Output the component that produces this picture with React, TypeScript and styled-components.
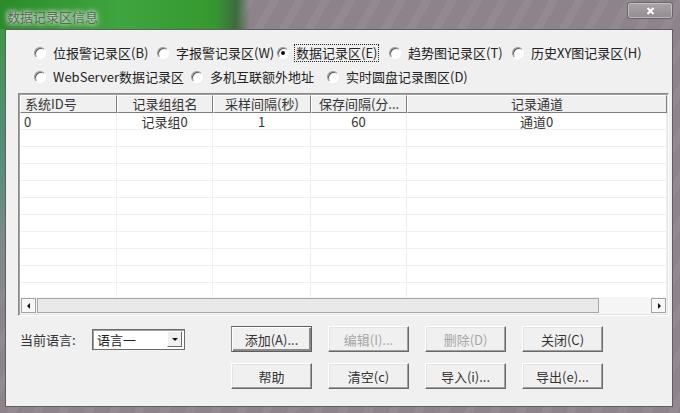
import React from "react";
import styled, { createGlobalStyle } from "styled-components";

const GlobalStyle = createGlobalStyle`
  html, body {
    margin: 0;
    padding: 0;
  }
  body {
    font-family: "Noto Sans CJK SC", "Noto Sans", sans-serif;
    font-size: 13px;
    color: #222;
  }
`;

// Window frame (aero style, green window behind on the left)
const Window = styled.div`
  width: 680px;
  height: 413px;
  box-sizing: border-box;
  display: flex;
  flex-direction: column;
  padding: 0 7px 6px 5px;
  background:
    linear-gradient(
        to right,
        #2b8a2b 0px,
        #3fa53f 120px,
        #35982f 215px,
        #3c6d3c 236px,
        rgba(142, 134, 140, 0) 250px
      )
      top left / 100% 29px no-repeat,
    linear-gradient(to bottom, #3a9a3a 0%, #4f8f78 35%, #7c8a8a 60%, rgba(142, 134, 140, 0) 80%)
      top left / 5px 100% no-repeat,
    repeating-linear-gradient(
      120deg,
      #8c848a 0px,
      #8c848a 14px,
      #928a90 14px,
      #928a90 22px
    );
`;

const TitleBar = styled.div`
  height: 29px;
  display: flex;
  justify-content: space-between;
  align-items: flex-start;
`;

const TitleText = styled.div`
  padding: 8px 0 0 2px;
  line-height: 18px;
  font-size: 13px;
  color: #5d685d;
  text-shadow: 0 0 4px #fff, 0 0 7px rgba(255, 255, 255, 0.9);
`;

const CloseButton = styled.div`
  width: 44px;
  height: 15px;
  margin: 2px 0 0 0;
  border: 1px solid #6b6469;
  border-radius: 3px;
  background: linear-gradient(to bottom, #aaa3a8, #928b90);
  box-shadow: inset 0 0 0 1px rgba(255, 255, 255, 0.35);
  display: flex;
  align-items: center;
  justify-content: center;
`;

const ClientArea = styled.div`
  flex: 1;
  display: flex;
  flex-direction: column;
  background: #f0f0f0;
  border: 1px solid #625d61;
  padding: 11px 3px 0 12px;
`;

// Radio buttons
const RadioGroup = styled.div`
  padding-left: 16px;
  margin-bottom: 4px;
`;

const RadioRow = styled.div`
  display: flex;
  height: 24px;
  align-items: center;
`;

const RadioItem = styled.label<{ $w?: number }>`
  display: flex;
  align-items: center;
  gap: 6px;
  width: ${(p) => (p.$w ? `${p.$w}px` : "auto")};
  flex: none;
  white-space: nowrap;
  line-height: 16px;
`;

const RadioCircle = styled.span<{ $checked?: boolean }>`
  width: 12px;
  height: 12px;
  box-sizing: border-box;
  border-radius: 50%;
  background: #fff;
  border: 1px solid;
  border-color: #9a9a9a #fff #fff #9a9a9a;
  box-shadow: inset 1px 1px 0 #5a5a5a;
  display: flex;
  align-items: center;
  justify-content: center;

  &::after {
    content: "";
    display: ${(p) => (p.$checked ? "block" : "none")};
    width: 4px;
    height: 4px;
    border-radius: 50%;
    background: #111;
  }
`;

const RadioText = styled.span<{ $focus?: boolean }>`
  padding: 0 1px;
  outline: ${(p) => (p.$focus ? "1px dotted #222" : "none")};
`;

// List view
const cols = "97px 96px 98px 96px 1fr";

const Table = styled.div`
  height: 223px;
  box-sizing: border-box;
  display: flex;
  flex-direction: column;
  border: 1px solid;
  border-color: #8a8a8a #fff #fff #8a8a8a;
  box-shadow: inset 1px 1px 0 #a0a0a0, inset -1px -1px 0 #e3e3e3;
  padding: 1px;
  background: #fff;
`;

const HeaderRow = styled.div`
  display: grid;
  grid-template-columns: ${cols};
  height: 18px;
  background: #f0f0f0;
`;

const HeaderCell = styled.div<{ $align?: string }>`
  box-sizing: border-box;
  border-top: 1px solid #fff;
  border-left: 1px solid #fff;
  border-right: 1px solid #7d7d7d;
  border-bottom: 1px solid #7d7d7d;
  text-align: ${(p) => p.$align || "center"};
  padding: 0 4px;
  line-height: 15px;
  color: #333;
  white-space: nowrap;
  overflow: hidden;
`;

const Body = styled.div`
  flex: 1;
  overflow: hidden;
`;

const Row = styled.div`
  display: grid;
  grid-template-columns: ${cols};
  height: 17px;
  box-sizing: border-box;
  border-bottom: 1px solid #f0f0f0;
`;

const Cell = styled.div<{ $align?: string }>`
  border-right: 1px solid #f0f0f0;
  text-align: ${(p) => p.$align || "center"};
  padding: 2px 4px 0;
  line-height: 14px;
  color: #333;
  white-space: nowrap;
`;

const ScrollBar = styled.div`
  height: 17px;
  display: grid;
  grid-template-columns: 17px 562px 1fr 17px;
  background: #f5f5f5;
  align-items: center;
`;

const ArrowButton = styled.div`
  width: 15px;
  height: 15px;
  box-sizing: border-box;
  border: 1px solid #a2a2a2;
  background: #f7f7f7;
  display: flex;
  align-items: center;
  justify-content: center;
  margin-left: 1px;
`;

const Thumb = styled.div`
  height: 15px;
  box-sizing: border-box;
  border: 1px solid #a7a7a7;
  background: #e9e9e9;
`;

// Bottom controls
const BottomBar = styled.div`
  display: flex;
  padding-top: 10px;
`;

const LangBlock = styled.div`
  width: 213px;
  height: 26px;
  display: flex;
  align-items: center;
  padding-left: 2px;
  box-sizing: border-box;
`;

const LangLabel = styled.span`
  width: 72px;
  color: #333;
`;

const Combo = styled.div`
  width: 93px;
  height: 21px;
  box-sizing: border-box;
  border: 1px solid #6b6b6b;
  box-shadow: inset 1px 1px 0 #a0a0a0;
  background: #fff;
  display: flex;
  align-items: center;
  justify-content: space-between;
  padding: 0 2px 0 4px;
`;

const DropButton = styled.div`
  width: 15px;
  height: 16px;
  box-sizing: border-box;
  background: #f0f0f0;
  border: 1px solid;
  border-color: #fff #696969 #696969 #fff;
  display: flex;
  align-items: center;
  justify-content: center;
`;

const ButtonGrid = styled.div`
  display: grid;
  grid-template-columns: repeat(4, 81px);
  grid-auto-rows: 26px;
  column-gap: 16px;
  row-gap: 11px;
`;

const Button = styled.div<{ $disabled?: boolean; $default?: boolean }>`
  box-sizing: border-box;
  background: #f0f0f0;
  border: 1px solid;
  border-color: ${(p) =>
    p.$default ? "#5e5e5e #5e5e5e #5e5e5e #8a8a8a" : "#fff #696969 #696969 #fff"};
  box-shadow: ${(p) =>
    p.$default
      ? "inset 1px 1px 0 #fff, inset -2px -2px 0 #8a8a8a"
      : "inset -1px -1px 0 #a0a0a0, inset 1px 1px 0 #e3e3e3"};
  display: flex;
  align-items: center;
  justify-content: center;
  color: ${(p) => (p.$disabled ? "#a6a6a6" : "#333")};
  white-space: nowrap;
`;

const radiosTop = [
  { w: 123, text: "位报警记录区(B)" },
  { w: 120, text: "字报警记录区(W)" },
  { w: 112, text: "数据记录区(E)", checked: true },
  { w: 123, text: "趋势图记录区(T)" },
  { text: "历史XY图记录区(H)" },
];

const radiosBottom = [
  { w: 157, text: "WebServer数据记录区" },
  { w: 136, text: "多机互联额外地址" },
  { text: "实时圆盘记录图区(D)" },
];

const headers = [
  { text: "系统ID号", align: "left" },
  { text: "记录组组名" },
  { text: "采样间隔(秒)" },
  { text: "保存间隔(分..." },
  { text: "记录通道" },
];

const rows: string[][] = [["0", "记录组0", "1", "60", "通道0"]];
while (rows.length < 12) rows.push(["", "", "", "", ""]);

const buttons = [
  { text: "添加(A)...", def: true },
  { text: "编辑(I)...", disabled: true },
  { text: "删除(D)", disabled: true },
  { text: "关闭(C)" },
  { text: "帮助" },
  { text: "清空(c)" },
  { text: "导入(i)..." },
  { text: "导出(e)..." },
];

const Tri: React.FC<{ dir: "left" | "right" | "down" }> = ({ dir }) => {
  const pts =
    dir === "left" ? "5,1 5,7 2,4" : dir === "right" ? "3,1 3,7 6,4" : "1,3 7,3 4,6";
  return (
    <svg width="8" height="8" viewBox="0 0 8 8">
      <polygon points={pts} fill="#111" />
    </svg>
  );
};

const Radio: React.FC<{ w?: number; text: string; checked?: boolean }> = ({
  w,
  text,
  checked,
}) => (
  <RadioItem $w={w}>
    <RadioCircle $checked={checked} />
    <RadioText $focus={checked}>{text}</RadioText>
  </RadioItem>
);

const App: React.FC = () => {
  return (
    <>
      <GlobalStyle />
      <Window>
        <TitleBar>
          <TitleText>数据记录区信息</TitleText>
          <CloseButton>
            <svg width="9" height="8" viewBox="0 0 9 8">
              <path d="M1.5 1 L7.5 7 M7.5 1 L1.5 7" stroke="#fff" strokeWidth="2" />
            </svg>
          </CloseButton>
        </TitleBar>

        <ClientArea>
          <RadioGroup>
            <RadioRow>
              {radiosTop.map((r) => (
                <Radio key={r.text} {...r} />
              ))}
            </RadioRow>
            <RadioRow>
              {radiosBottom.map((r) => (
                <Radio key={r.text} {...r} />
              ))}
            </RadioRow>
          </RadioGroup>

          <Table>
            <HeaderRow>
              {headers.map((h) => (
                <HeaderCell key={h.text} $align={h.align}>
                  {h.text}
                </HeaderCell>
              ))}
            </HeaderRow>
            <Body>
              {rows.map((r, i) => (
                <Row key={i}>
                  {r.map((c, j) => (
                    <Cell key={j} $align={j === 0 ? "left" : "center"}>
                      {c}
                    </Cell>
                  ))}
                </Row>
              ))}
            </Body>
            <ScrollBar>
              <ArrowButton>
                <Tri dir="left" />
              </ArrowButton>
              <Thumb />
              <div />
              <ArrowButton>
                <Tri dir="right" />
              </ArrowButton>
            </ScrollBar>
          </Table>

          <BottomBar>
            <LangBlock>
              <LangLabel>当前语言:</LangLabel>
              <Combo>
                <span>语言一</span>
                <DropButton>
                  <Tri dir="down" />
                </DropButton>
              </Combo>
            </LangBlock>
            <ButtonGrid>
              {buttons.map((b) => (
                <Button key={b.text} $disabled={b.disabled} $default={b.def}>
                  {b.text}
                </Button>
              ))}
            </ButtonGrid>
          </BottomBar>
        </ClientArea>
      </Window>
    </>
  );
};

export default App;
